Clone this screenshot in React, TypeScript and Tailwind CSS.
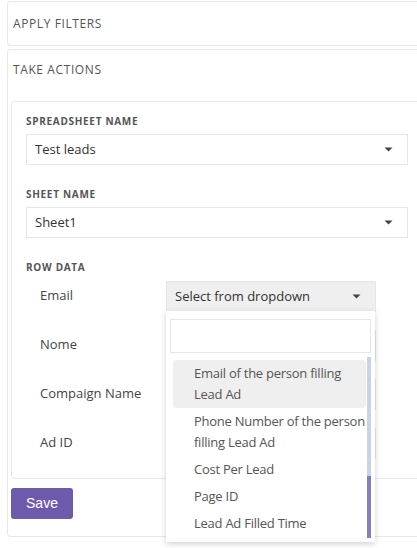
import { useState } from 'react';

const head = { fontFamily: '"Open Sans", "Noto Sans", sans-serif' };
const body = { fontFamily: '"Open Sans", "Noto Sans", sans-serif' };

function Caret() {
  return (
    <svg width="9" height="5" viewBox="0 0 9 5" className="shrink-0">
      <path d="M0.5 0.5h8L4.5 4.5z" fill="#444" />
    </svg>
  );
}

function SelectBox({ value, active }: { value: string; active?: boolean }) {
  return (
    <div
      className={`flex h-[31px] items-center justify-between border border-[#e6e6e6] pl-[8px] pr-[14px] text-[13px] text-[#333] ${
        active ? 'bg-[#efefef]' : 'bg-white'
      }`}
      style={body}
    >
      <span>{value}</span>
      <Caret />
    </div>
  );
}

const options = [
  'Email of the person filling Lead Ad',
  'Phone Number of the person filling Lead Ad',
  'Cost Per Lead',
  'Page ID',
  'Lead Ad Filled Time',
];

export default function App() {
  const [selected] = useState(0);
  const rows = ['Email', 'Nome', 'Compaign Name', 'Ad ID'];

  return (
    <div className="min-h-[548px] bg-white pl-[7px] pt-px">
      <div className="flex h-[45px] items-center rounded-l-[4px] border border-r-0 border-[#e8e8e8] pl-[5px]">
        <span className="text-[12px] tracking-[0.6px] text-[#555]" style={head}>APPLY FILTERS</span>
      </div>

      <div className="mt-[3px] rounded-l-[4px] border border-r-0 border-[#e8e8e8] pb-[17px] pl-[3px]">
        <div className="flex h-[44px] items-center pb-[4px] pl-[2px]">
          <span className="text-[12px] tracking-[0.6px] text-[#555]" style={head}>TAKE ACTIONS</span>
        </div>

        <div className="mt-[7px] rounded-l-[4px] border border-r-0 border-[#e8e8e8] pb-[19px] pl-[14px] pr-[9px] pt-[12px]">
          <div className="text-[10px] font-bold tracking-[0.7px] text-[#555]" style={head}>SPREADSHEET NAME</div>
          <div className="mt-[5px]">
            <SelectBox value="Test leads" />
          </div>

          <div className="mt-[22px] text-[10px] font-bold tracking-[0.7px] text-[#555]" style={head}>SHEET NAME</div>
          <div className="mt-[5px]">
            <SelectBox value="Sheet1" />
          </div>

          <div className="mt-[22px] text-[10px] font-bold tracking-[0.7px] text-[#555]" style={head}>ROW DATA</div>

          <div className="mt-[6px] flex flex-col gap-[18px]">
            {rows.map((r, i) => (
              <div key={r} className="relative flex items-start">
                <div className="w-[140px] shrink-0 pl-[14px] pt-[5px] text-[13px] text-[#444]" style={body}>
                  {r}
                </div>
                <div className="w-[210px]">
                  {/* rows under the open menu are covered, so their placeholder is not shown */}
                  <SelectBox value={i === 0 ? 'Select from dropdown' : ''} active={i === 0} />
                </div>

                {i === 0 && (
                  <div className="absolute left-[140px] top-[30px] z-10 w-[209px] bg-white pb-[4px] shadow-[0_2px_6px_rgba(0,0,0,0.18)]">
                    <div className="mx-[4px] mt-[8px] h-[34px] border border-[#e6e6e6] bg-white" />
                    <div className="mt-[4px] flex h-[181px] pl-[7px]">
                      <div className="flex-1 overflow-hidden pt-[3px]">
                        {options.map((o, k) => (
                          <div
                            key={o}
                            className={`rounded-[3px] py-[3px] pl-[21px] text-[13px] leading-[21px] tracking-[-0.25px] text-[#555] ${
                              k === selected ? 'bg-[#efefef]' : ''
                            }`}
                            style={body}
                          >
                            {o}
                          </div>
                        ))}
                      </div>
                      <div className="ml-[1px] mr-[4px] flex w-[4px] flex-col">
                        <div className="h-[119px] bg-[#c6d4e6]" />
                        <div className="flex-1 bg-[#8a7cc0]" />
                      </div>
                    </div>
                  </div>
                )}
              </div>
            ))}
          </div>
        </div>

        <button
          className="mt-[9px] h-[31px] w-[62px] rounded-[3px] bg-[#6e5aad] text-[14px] text-white"
          style={{ fontFamily: '"Liberation Sans", Arial, sans-serif' }}
        >
          Save
        </button>
      </div>
    </div>
  );
}
